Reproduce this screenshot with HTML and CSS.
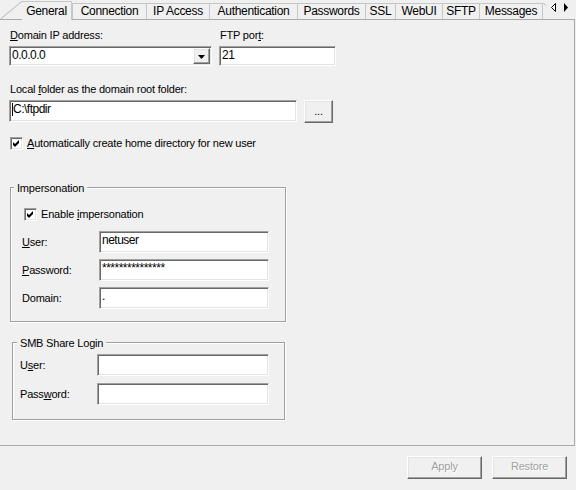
FILE: index.html
```html
<!DOCTYPE html>
<html>
<head>
<meta charset="utf-8">
<title>Domain settings</title>
<link rel="stylesheet" href="styles.css">
</head>
<body>
<div class="tabbar">
  <div class="tab-lead"><svg width="22" height="19" viewBox="0 0 22 19"><path d="M0.5 19 L17 5.5 Q19.5 3 22 1.5" fill="none" stroke="#b4b4b4" stroke-width="1"/></svg></div>
  <div class="tab tab-selected t-general">General</div>
  <div class="tab t-connection">Connection</div>
  <div class="tab t-ip">IP Access</div>
  <div class="tab t-auth">Authentication</div>
  <div class="tab t-passwords">Passwords</div>
  <div class="tab t-ssl">SSL</div>
  <div class="tab t-webui">WebUI</div>
  <div class="tab t-sftp">SFTP</div>
  <div class="tab tab-last t-messages">Messages</div>
  <div class="tab-scroll">
    <svg width="33" height="19" viewBox="0 0 33 19">
      <path d="M0 2.5 L3 5.5" fill="none" stroke="#b4b4b4" stroke-width="1"/>
      <polygon points="8.5,7.5 12.5,3.5 12.5,11.5" fill="#fff" stroke="#000" stroke-width="1"/>
      <polygon points="25,7.5 21,3 21,12" fill="#000"/>
    </svg>
  </div>
</div>

<div class="panel">
  <div class="row-ip">
    <div class="col col-ip">
      <span class="label"><u>D</u>omain IP address:</span>
      <div class="combo">
        <span class="combo-value">0.0.0.0</span>
        <span class="combo-btn raised"><svg width="7" height="4" viewBox="0 0 7 4"><polygon points="0,0 7,0 3.5,4" fill="#000"/></svg></span>
      </div>
    </div>
    <div class="col col-port">
      <span class="label">FTP por<u>t</u>:</span>
      <div class="field field-short">21</div>
    </div>
  </div>

  <span class="label label-folder">Local <u>f</u>older as the domain root folder:</span>
  <div class="row-folder">
    <div class="field field-folder"><span class="caret"></span>C:\ftpdir</div>
    <button class="btn raised btn-browse" type="button">...</button>
  </div>

  <div class="check-row check-top">
    <span class="checkbox"><svg width="11" height="11" viewBox="0 0 11 11"><polygon points="2,4 4,6 8,2 8,5 4,9 2,7" fill="#000"/></svg></span>
    <span class="label"><u>A</u>utomatically create home directory for new user</span>
  </div>

  <div class="group group-imp">
    <div class="group-title">Impersonation</div>
    <div class="check-row check-imp">
      <span class="checkbox"><svg width="11" height="11" viewBox="0 0 11 11"><polygon points="2,4 4,6 8,2 8,5 4,9 2,7" fill="#000"/></svg></span>
      <span class="label">Enable <u>i</u>mpersonation</span>
    </div>
    <div class="form-grid grid-imp">
      <span class="label"><u>U</u>ser:</span>
      <div class="field">netuser</div>
      <span class="label"><u>P</u>assword:</span>
      <div class="field">***************</div>
      <span class="label">Domain:</span>
      <div class="field">.</div>
    </div>
  </div>

  <div class="group group-smb">
    <div class="group-title title-smb">SMB Share Login</div>
    <div class="form-grid grid-smb">
      <span class="label">U<u>s</u>er:</span>
      <div class="field"></div>
      <span class="label">Pass<u>w</u>ord:</span>
      <div class="field"></div>
    </div>
  </div>
</div>

<div class="footer">
  <button class="btn raised btn-dlg" type="button" disabled>Apply</button>
  <button class="btn raised btn-dlg" type="button" disabled>Restore</button>
</div>
</body>
</html>
```
FILE: styles.css
```css
* { box-sizing: border-box; }

html, body { margin: 0; padding: 0; }

body {
  width: 576px;
  height: 490px;
  overflow: hidden;
  background: #f0f0f0;
  font-family: "Liberation Sans", Arial, sans-serif;
  font-size: 11px;
  letter-spacing: -0.2px;
  color: #000;
}

u { text-decoration: underline; text-underline-offset: 1px; }

/* ---------- tabs ---------- */
.tabbar {
  display: flex;
  height: 19px;
  position: relative;
  z-index: 1;
}

.tab-lead { width: 22px; height: 19px; flex: none; }
.tab-lead svg, .tab-scroll svg { display: block; }

.tab {
  flex: none;
  height: 16px;
  margin-top: 3px;
  border-top: 1px solid #c6c6c6;
  border-left: 1px solid #c6c6c6;
  background: #f0f0f0;
  font-size: 12px;
  line-height: 15px;
  letter-spacing: -0.3px;
  text-align: center;
  white-space: nowrap;
}

.tab-last { border-right: 1px solid #c6c6c6; }

.tab-selected {
  margin-top: 1px;
  height: 19px;
  padding-top: 2px;
  border-left: none;
  border-right: 1px solid #c6c6c6;
}

.t-general { width: 50px; }
.t-connection { width: 74px; }
.t-ip { width: 63px; }
.t-auth { width: 88px; }
.t-passwords { width: 68px; }
.t-ssl { width: 30px; }
.t-webui { width: 47px; }
.t-sftp { width: 37px; }
.t-messages { width: 64px; }

.tab-scroll { width: 33px; height: 19px; flex: none; }

/* ---------- panel ---------- */
.panel {
  width: 575px;
  height: 427px;
  border-top: 1px solid #a9a9a9;
  border-right: 1px solid #a9a9a9;
  border-bottom: 1px solid #a9a9a9;
  padding-top: 9px;
}

.label {
  display: block;
  line-height: 13px;
  white-space: nowrap;
}

.row-ip {
  display: flex;
  gap: 7px;
  margin-left: 9px;
}

.col {
  display: flex;
  flex-direction: column;
  gap: 4px;
}
.col .label { padding-left: 1px; }
.col-ip { width: 203px; }
.col-port { width: 117px; }

.sunken {
  border: 1px solid;
}

.field, .combo {
  border: 1px solid;
  border-color: #a0a0a0 #ffffff #ffffff #a0a0a0;
  box-shadow: inset 1px 1px 0 #696969, inset -1px -1px 0 #e3e3e3;
  background: #ffffff;
}

.field {
  height: 22px;
  padding: 2px 0 0 2px;
  font-size: 12px;
  line-height: 13px;
  letter-spacing: -0.5px;
  white-space: nowrap;
  overflow: hidden;
}

.field-short { height: 20px; }

.combo {
  display: flex;
  height: 20px;
  padding: 1px;
}

.combo-value {
  flex: 1;
  padding: 1px 0 0 1px;
  font-size: 12px;
  line-height: 13px;
  letter-spacing: -0.5px;
}

.combo-btn {
  width: 17px;
  height: 16px;
  display: flex;
  align-items: center;
  justify-content: center;
}
.combo-btn svg { display: block; margin-top: 1px; }

.raised {
  border: 1px solid;
  border-color: #ffffff #696969 #696969 #ffffff;
  box-shadow: inset -1px -1px 0 #a0a0a0, inset 1px 1px 0 #e3e3e3;
  background: #f0f0f0;
}

.label-folder {
  margin: 17px 0 0 10px;
}

.row-folder {
  display: flex;
  gap: 7px;
  margin: 4px 0 0 9px;
}

.field-folder { width: 288px; }

.caret {
  display: inline-block;
  width: 1px;
  height: 13px;
  background: #000;
  vertical-align: top;
}

.btn {
  font: inherit;
  letter-spacing: inherit;
  color: #000;
  padding: 0;
  margin: 0;
  line-height: 13px;
}

.btn-browse {
  width: 29px;
  height: 23px;
}

.check-row {
  display: flex;
  align-items: center;
  gap: 4px;
}

.check-top { margin: 14px 0 0 10px; }

.checkbox {
  width: 13px;
  height: 13px;
  flex: none;
  border: 1px solid;
  border-color: #a0a0a0 #ffffff #ffffff #a0a0a0;
  box-shadow: inset 1px 1px 0 #696969, inset -1px -1px 0 #e3e3e3;
  background: #ffffff;
}
.checkbox svg { display: block; }

/* ---------- group boxes ---------- */
.group {
  border: 1px solid #a0a0a0;
  box-shadow: inset 1px 1px 0 #ffffff, 1px 1px 0 #ffffff;
}

.group-title {
  width: fit-content;
  margin: -6px 0 0 3px;
  padding: 0 3px;
  background: #f0f0f0;
  line-height: 13px;
  white-space: nowrap;
}

.title-smb { margin-left: 4px; }

.group-imp {
  width: 276px;
  margin: 37px 0 0 10px;
  padding-bottom: 12px;
}

.check-imp { margin: 13px 0 0 13px; }

.form-grid {
  display: grid;
  align-items: center;
}

.grid-imp {
  grid-template-columns: 77px 170px;
  row-gap: 6px;
  margin: 10px 0 0 11px;
}

.group-smb {
  width: 273px;
  margin: 20px 0 0 12px;
  padding-bottom: 14px;
}

.grid-smb {
  grid-template-columns: 77px 172px;
  row-gap: 7px;
  margin: 4px 0 0 7px;
}

/* ---------- footer ---------- */
.footer {
  display: flex;
  justify-content: flex-end;
  gap: 10px;
  padding: 10px 9px 0 0;
}

.btn-dlg {
  width: 75px;
  height: 23px;
  padding-bottom: 2px;
}

.btn-dlg:disabled {
  color: #a0a0a0;
  text-shadow: 1px 1px 0 #ffffff;
}
```
